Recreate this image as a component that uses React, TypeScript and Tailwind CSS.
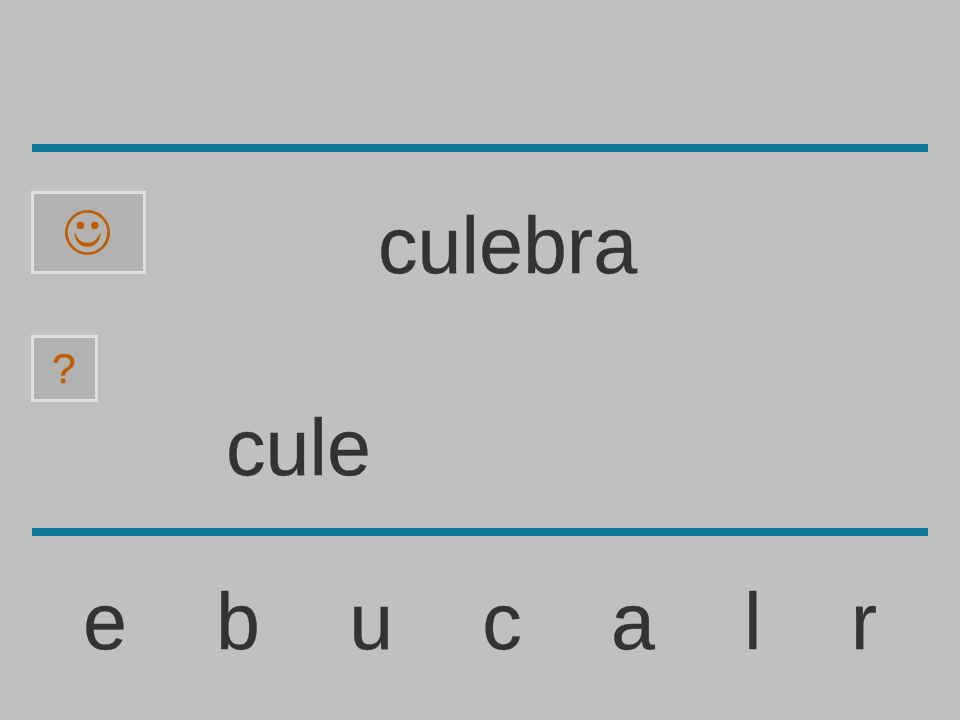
const letters = ["e", "b", "u", "c", "a", "l", "r"];

function Smiley() {
  return (
    <svg viewBox="0 0 45 45" className="h-[45px] w-[45px]" fill="#c05c00">
      <circle cx="22.5" cy="22.5" r="21.1" fill="none" stroke="#c05c00" strokeWidth="2.7" />
      <circle cx="15.4" cy="15.4" r="3.7" />
      <circle cx="29.8" cy="15.4" r="3.7" />
      <path d="M9.4 23.2C9.8 31.4 15.5 36.8 22.5 36.8S35.2 31.4 35.6 23.2H34.6C32.6 29.4 28.6 32.8 22.5 32.8S12.4 29.4 10.4 23.2Z" />
    </svg>
  );
}

export default function App() {
  return (
    <main className="flex h-[720px] w-[960px] flex-col overflow-hidden bg-[#c0c0c0] px-8 pt-36 font-['Liberation_Sans',sans-serif] text-[79px] leading-[90px] text-[#333333] [-webkit-text-stroke:0.3px]">
      <div className="h-2 shrink-0 bg-[#10799a]" />

      <section className="flex h-[376px] shrink-0">
        <div className="-ml-px flex w-[195px] flex-col items-start gap-[61px] pt-[39px]">
          <button className="flex h-[83px] w-[115px] items-center justify-center border-[3px] border-[#e0e0e0] bg-[#b2b2b2] pr-0.5">
            <Smiley />
          </button>
          <button className="flex h-[67px] w-[67px] items-center justify-center border-[3px] border-[#e0e0e0] bg-[#b2b2b2] pr-px text-[43px] leading-none text-[#c05c00]">
            ?
          </button>
        </div>
        <div className="flex flex-col pt-[49px]">
          <p className="pl-[152px]">culebra</p>
          <p className="mt-[112px]">cule</p>
        </div>
      </section>

      <div className="h-2 shrink-0 bg-[#10799a]" />

      {/* Letters still to be placed */}
      <div className="flex justify-between pt-[41px] pr-[51px] pl-[51px]">
        {letters.map((letter) => (
          <button key={letter}>{letter}</button>
        ))}
      </div>
    </main>
  );
}
